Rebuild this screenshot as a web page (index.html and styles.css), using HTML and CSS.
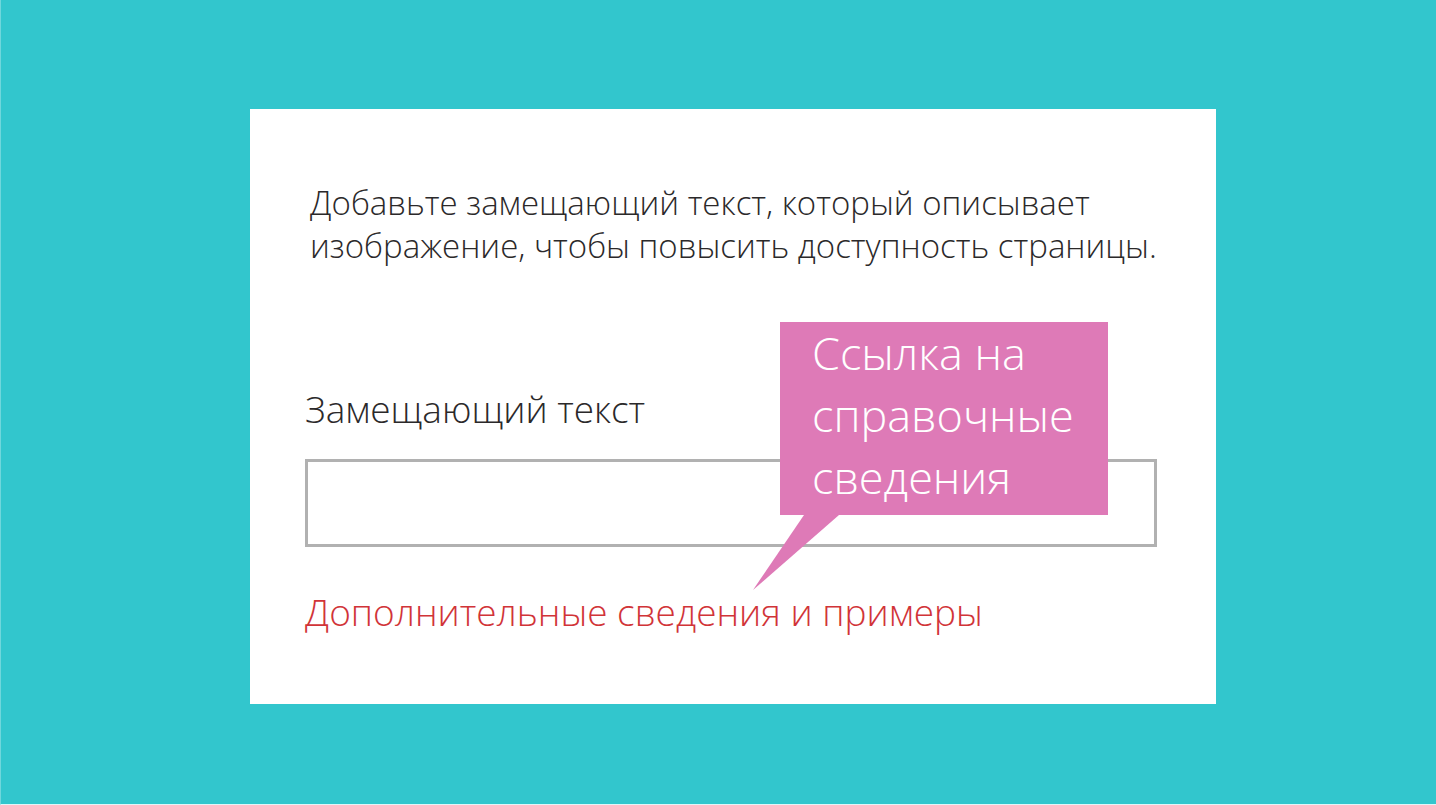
FILE: index.html
```html
<!DOCTYPE html>
<html lang="ru">
<head>
<meta charset="utf-8">
<title>Замещающий текст</title>
<link rel="stylesheet" href="styles.css">
</head>
<body>
<main class="stage">
  <form class="card">
    <p class="intro">Добавьте замещающий текст, который описывает изображение, чтобы повысить доступность страницы.</p>
    <label class="label" for="alt">Замещающий текст</label>
    <input class="field" id="alt" type="text">
    <a class="more" href="#">Дополнительные сведения и примеры</a>
    <div class="callout">
      <p class="callout-text">Ссылка на справочные сведения</p>
      <svg class="callout-tail" viewBox="0 0 86 75" aria-hidden="true"><path d="M51 0H86L0 75Z"/></svg>
    </div>
  </form>
</main>
</body>
</html>
```
FILE: styles.css
```css
* {
  box-sizing: border-box;
}

body {
  margin: 0;
  font-family: "Open Sans", "Noto Sans", sans-serif;
  font-weight: 300;
  color: #2b292a;
}

.stage {
  display: flex;
  flex-direction: column;
  align-items: center;
  min-height: 100vh;
  padding: 109px 0 99px 29px;
  border-left: 1px solid #6fd7dc;
  border-bottom: 1px solid #e0f6f7;
  background: #32c6cd;
}

.card {
  position: relative;
  display: flex;
  flex-direction: column;
  width: 966px;
  max-width: 100%;
  padding: 72px 59px 68px 55px;
  background: #fff;
}

.intro {
  margin: 0 0 0 5px;
  font-size: 33px;
  line-height: 43px;
}

.label {
  margin-top: 118px;
  font-size: 37px;
  line-height: 48px;
}

.field {
  width: 100%;
  height: 88px;
  margin-top: 26px;
  padding: 0 20px;
  border: 3px solid #b1b1b1;
  background: #fff;
  font: inherit;
  font-size: 37px;
}

.more {
  align-self: flex-start;
  margin-top: 41px;
  font-size: 37px;
  line-height: 48px;
  color: #d13438;
  text-decoration: none;
}

.callout {
  position: absolute;
  top: 213px;
  right: 108px;
  width: 328px;
  background: #de7ab7;
  color: #fff;
}

.callout-text {
  margin: 0;
  padding: 0 32px 7px;
  font-size: 45px;
  line-height: 62px;
}

.callout-tail {
  position: absolute;
  top: 100%;
  left: -27px;
  width: 86px;
  height: 75px;
  fill: #de7ab7;
}
```
